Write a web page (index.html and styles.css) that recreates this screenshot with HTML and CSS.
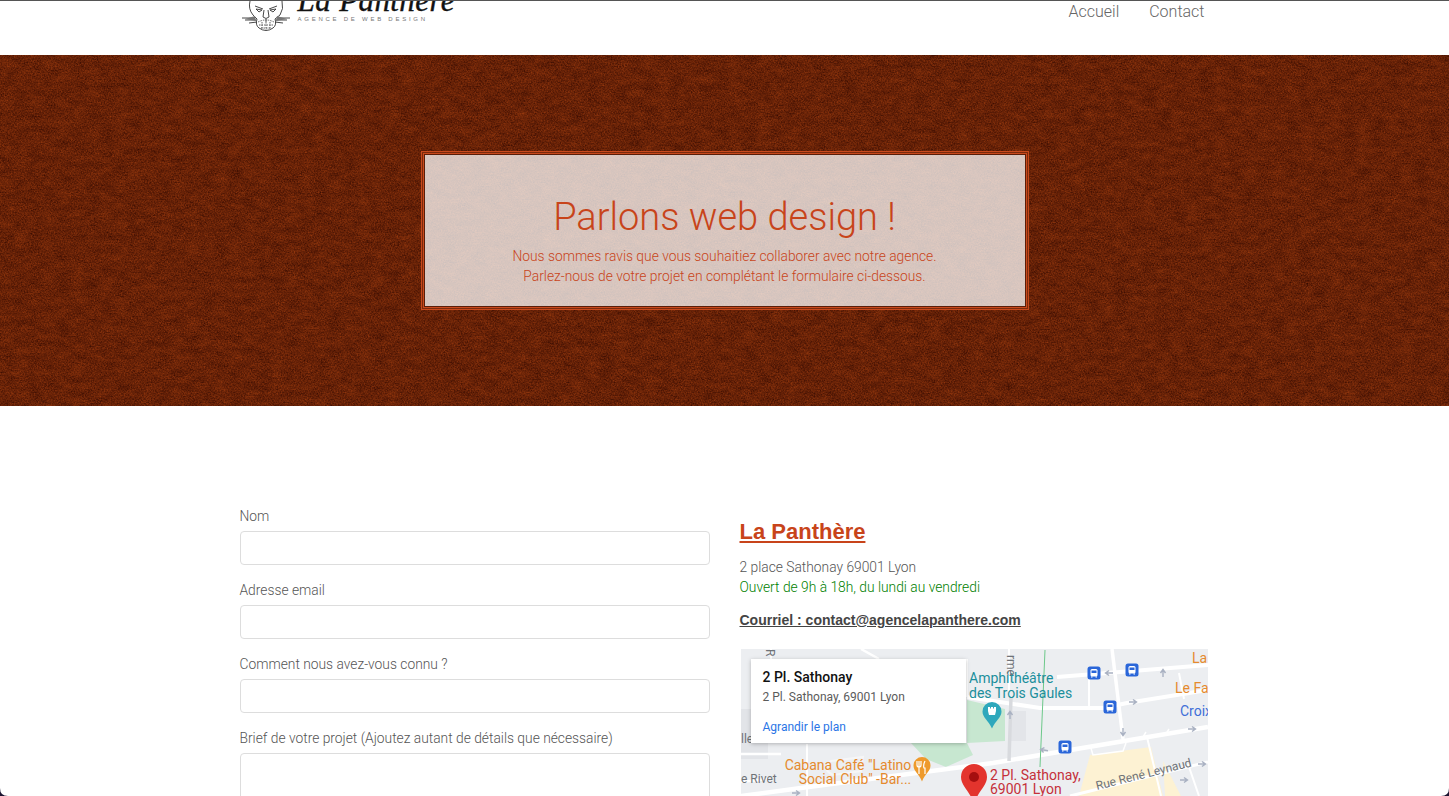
FILE: index.html
```html
<!DOCTYPE html>
<html lang="fr">
<head>
    <meta charset="UTF-8">
    <title>La Panthère - Contact</title>
    <link rel="stylesheet" href="styles.css">
</head>
<body>
    <header class="site-header">
        <div class="container header-row">
            <a class="logo" href="#">
                <svg class="logo-head" width="48" height="31" viewBox="0 0 48 31" fill="none" stroke="#333" stroke-width="0.9">
                    <path d="M8 0 Q6 8 11 14 L15 18 Q13 24 17 27 Q24 32 31 27 Q35 24 33 18 L38 14 Q42 8 40 0"/>
                    <path d="M13 5 L21 8 M35 5 L27 8 M14 8 L20 9 L17 11 Z M34 8 L28 9 L31 11 Z"/>
                    <path d="M22 9 L21 16 Q24 19 27 16 L26 9 M24 18 V21"/>
                    <path d="M16 21 Q24 17 32 21 M17 24 H31 M19 27 H29 M20 21 V28 M24 21 V29 M28 21 V28" stroke="#555" stroke-dasharray="1.500 1"/>
                    <path d="M0 17 L13 17 M3 19 L14 19 M7 22 L15 21 M48 17 L35 17 M45 19 L34 19 M41 22 L33 21" stroke="#333"/>
                    <path d="M3 18 L13 15 L14 20 Z M45 18 L35 15 L34 20 Z" fill="#777" stroke="none"/>
                </svg>
                <span class="logo-text">
                    <span class="logo-name">La Panthère</span>
                    <span class="logo-tag">AGENCE DE WEB DESIGN</span>
                </span>
            </a>
            <nav class="main-nav">
                <a href="#">Accueil</a>
                <a href="#">Contact</a>
            </nav>
        </div>
    </header>

    <section class="hero">
        <svg class="hero-texture" width="100%" height="100%" aria-hidden="true">
            <filter id="rust" x="0" y="0" width="100%" height="100%" color-interpolation-filters="sRGB">
                <feTurbulence type="fractalNoise" baseFrequency="0.7" numOctaves="2" seed="7" result="fine"/>
                <feTurbulence type="fractalNoise" baseFrequency="0.07 0.14" numOctaves="3" seed="3" result="coarse"/>
                <feComposite in="fine" in2="coarse" operator="arithmetic" k1="0" k2="0.75" k3="0.3" k4="-0.03"/>
                <feColorMatrix type="matrix" values="0.5 0 0 0 0.17  0.24 0 0 0 0.02  0.07 0 0 0 -0.005  0 0 0 0 1"/>
            </filter>
            <rect width="100%" height="100%" filter="url(#rust)"/>
        </svg>
        <div class="hero-box">
            <h1>Parlons web design !</h1>
            <p>Nous sommes ravis que vous souhaitiez collaborer avec notre agence.<br>Parlez-nous de votre projet en complétant le formulaire ci-dessous.</p>
        </div>
    </section>

    <main class="container contact">
        <form class="contact-form">
            <label for="nom">Nom</label>
            <input type="text" id="nom">
            <label for="email">Adresse email</label>
            <input type="text" id="email">
            <label for="connu">Comment nous avez-vous connu ?</label>
            <input type="text" id="connu">
            <label for="brief">Brief de votre projet (Ajoutez autant de détails que nécessaire)</label>
            <textarea id="brief" rows="6"></textarea>
        </form>

        <div class="contact-info">
            <h2>La Panthère</h2>
            <p class="address">2 place Sathonay 69001 Lyon</p>
            <p class="hours">Ouvert de 9h à 18h, du lundi au vendredi</p>
            <p class="mail">Courriel : contact@agencelapanthere.com</p>

            <div class="map">
                <svg width="467" height="147" viewBox="0 0 467 147">
                    <defs>
                        <g id="bus">
                            <rect x="-6.500" y="-6.500" width="13" height="13" rx="2.500" fill="#2a66d9"/>
                            <rect x="-3.500" y="-4" width="7" height="7.500" rx="1.500" fill="#fff"/>
                            <rect x="-2.500" y="-2.500" width="5" height="2.500" fill="#2a66d9"/>
                            <rect x="-3" y="3.500" width="1.500" height="1" fill="#fff"/>
                            <rect x="1.500" y="3.500" width="1.500" height="1" fill="#fff"/>
                        </g>
                        <path id="arrow" d="M-4 0 H3 M0 -2.500 L3.500 0 L0 2.500" fill="none" stroke="#a9b1c2" stroke-width="1.400"/>
                    </defs>
                    <rect width="467" height="147" fill="#eceef1"/>
                    <rect x="0" y="60" width="27" height="50" fill="#e2e4e8"/>
                    <rect x="268" y="62" width="17" height="30" fill="#e3e5e9"/>
                    <path d="M226 51 L264 60 L264 92 L226 94 Z" fill="#c7e7d0"/>
                    <path d="M170 94 L226 94 L232 106 L205 118 L185 110 Z" fill="#c7e7d0"/>
                    <path d="M349 106 L410 98 L422 147 L338 147 Z M422 112 L440 147 L424 147 Z" fill="#fdf2d3"/>
                    <g fill="none" stroke="#fff">
                        <path d="M226 48 L299 59 L362 59 L386 54 L467 41" stroke-width="4"/>
                        <path d="M316 28 L467 16" stroke-width="4"/>
                        <path d="M252 114 L467 78 M0 147 L60 139 L252 114" stroke-width="4.500"/>
                        <path d="M329 147 L467 113" stroke-width="3"/>
                        <path d="M371 0 L382 90" stroke-width="3.500"/>
                        <path d="M406 88 L420 147 M348 30 L348 58 M438 24 L443 50 M447 115 L458 147 M66 95 L66 147 M30 0 L30 10 M268 0 L268 47 M226 10 L226 48" stroke-width="2"/>
                        <path d="M0 105 L40 105 M120 0 L138 10 M0 133 L28 130" stroke-width="2.500"/>
                        <path d="M270 48 L268 112" stroke="#d8dade" stroke-width="3.500"/>
                        <path d="M349 96 L352 106 L382 102 L385 94 M405 83 L402 88 L425 85 L428 80" stroke-width="1.500"/>
                        <path d="M90 112 Q80 120 92 126 L120 122 L122 108 Z" stroke="#f6f6f7" stroke-width="2"/>
                    </g>
                    <path d="M304 1 L299 118" fill="none" stroke="#6dc88a" stroke-width="1"/>
                    <use href="#arrow" x="368" y="24" transform="rotate(180 368 24)"/>
                    <use href="#arrow" x="392" y="53"/>
                    <use href="#arrow" x="451" y="80"/>
                    <use href="#arrow" x="303" y="101" transform="rotate(190 303 101)"/>
                    <use href="#arrow" x="382" y="83" transform="rotate(90 382 83)"/>
                    <use href="#arrow" x="422" y="24" transform="rotate(-90 422 24)"/>
                    <use href="#arrow" x="269" y="66" transform="rotate(-90 269 66)"/>
                    <use href="#arrow" x="461" y="115"/>
                    <use href="#arrow" x="443" y="131"/>
                    <use href="#arrow" x="55" y="144"/>
                    <use href="#bus" x="353" y="24"/>
                    <use href="#bus" x="391" y="21"/>
                    <use href="#bus" x="369" y="58"/>
                    <use href="#bus" x="324" y="98"/>

                    <!-- pins -->
                    <path d="M251 53 a9.500 9.500 0 0 1 9.500 9.500 c0 6 -6 9 -9.500 17 c-3.500 -8 -9.500 -11 -9.500 -17 a9.500 9.500 0 0 1 9.500 -9.500 Z" fill="#2ea8bc"/>
                    <path d="M247 62 V58 H249 V59.500 H250 V58 H252 V59.500 H253 V58 H255 V62 L254 66 H248 Z" fill="#fff"/>
                    <path d="M181 108 a8.500 8.500 0 0 1 8.500 8.500 c0 6 -5.500 8 -8.500 16 c-3 -8 -8.500 -10 -8.500 -16 a8.500 8.500 0 0 1 8.500 -8.500 Z" fill="#ee9a2c"/>
                    <path d="M178 112 V120 M176 112 V116 Q176 118 178 118 Q180 118 180 116 V112 M178 118 V125 M184 112 Q182 116 183 119 H184 V125" stroke="#fff" stroke-width="1.200" fill="none"/>
                    <path d="M233 115 a13 13 0 0 1 13 13 c0 9 -9 14 -13 27 c-4 -13 -13 -18 -13 -27 a13 13 0 0 1 13 -13 Z" fill="#e3342d"/>
                    <circle cx="233" cy="128" r="5" fill="#a50f0f"/>

                    <!-- labels -->
                    <g class="map-label">
                        <text class="lbl-teal" x="228" y="34">Amphithéâtre</text>
                        <text class="lbl-teal" x="228" y="49">des Trois Gaules</text>
                        <text class="lbl-orange" x="107" y="121" text-anchor="middle">Cabana Café "Latino</text>
                        <text class="lbl-orange" x="114" y="135" text-anchor="middle">Social Club" -Bar...</text>
                        <text class="lbl-red" x="249" y="131">2 Pl. Sathonay,</text>
                        <text class="lbl-red" x="249" y="145">69001 Lyon</text>
                        <text class="lbl-orange" x="451" y="14">La</text>
                        <text class="lbl-orange" x="434" y="44">Le Fa</text>
                        <text class="lbl-blue" x="439" y="67">Croix</text>
                        <text class="lbl-grey" x="0" y="134">e Rivet</text>
                        <text class="lbl-grey" x="0" y="94">lle</text>
                        <text class="lbl-grey" transform="translate(356 141) rotate(-14)">Rue René Leynaud</text>
                        <text class="lbl-grey" transform="translate(266 6) rotate(90)">rme</text>
                        <text class="lbl-grey" transform="translate(25 0) rotate(90)">R</text>
                    </g>
                </svg>
                <div class="map-card">
                    <strong>2 Pl. Sathonay</strong>
                    <span>2 Pl. Sathonay, 69001 Lyon</span>
                    <a href="#">Agrandir le plan</a>
                </div>
            </div>
        </div>
    </main>

    <div class="corner corner-left"></div>
    <div class="corner corner-right"></div>
</body>
</html>
```

FILE: styles.css
```css
html, body {
    height: 796px;
    overflow: hidden;
}
body {
    position: relative;
    margin: 0;
    background: #fff;
    color: #555;
    font-family: Roboto, "Liberation Sans", Arial, sans-serif;
    font-weight: 300;
    font-size: 13.8px;
}
a {
    color: inherit;
    text-decoration: none;
}
.container {
    width: 970px;
    margin: 0 auto;
}

/* header */
.site-header {
    height: 54px;
    border-top: 1px solid #555;
    overflow: hidden;
}
.header-row {
    display: flex;
    justify-content: space-between;
    align-items: flex-start;
}
.logo {
    display: flex;
    gap: 8px;
    margin-left: 2px;
}
.logo-text {
    display: flex;
    flex-direction: column;
    margin-top: -16px;
}
.logo-name {
    font-family: "Liberation Serif", serif;
    font-style: italic;
    font-weight: 400;
    font-size: 31px;
    line-height: 31px;
    color: #111;
    letter-spacing: 0.4px;
    -webkit-text-stroke: 0.4px #111;
}
.logo-tag {
    font-family: "Liberation Sans", sans-serif;
    font-weight: 400;
    font-size: 6px;
    line-height: 7px;
    letter-spacing: 2.75px;
    color: #777;
}
.main-nav {
    display: flex;
    gap: 30px;
    padding: 1px 5px 0 0;
    font-size: 16px;
    line-height: 20px;
    color: #666;
}

/* hero */
.hero {
    position: relative;
    display: flex;
    justify-content: center;
    height: 351px;
    background: #6b2508;
}
.hero-texture {
    position: absolute;
    top: 0;
    left: 0;
}
.hero-box {
    position: relative;
    box-sizing: border-box;
    width: 600px;
    height: 151px;
    margin-top: 100px;
    padding-top: 38px;
    background: rgba(255, 255, 255, 0.74);
    box-shadow: 0 0 0 1px #5a1d08, 0 0 0 2px #c8491c, 0 0 0 3px #7a2a0c, 0 0 0 4px #c8491c;
    text-align: center;
    color: #c8441a;
}
.hero-box h1 {
    margin: 0;
    font-size: 38px;
    font-weight: 300;
    line-height: 48px;
}
.hero-box p {
    margin: 5px 0 0;
    font-size: 13.8px;
    line-height: 20px;
}

/* contact */
.contact {
    display: grid;
    grid-template-columns: 1fr 1fr;
    gap: 30px;
    padding-top: 100px;
}
.contact-form label {
    display: block;
    height: 20px;
    margin-bottom: 5px;
    line-height: 20px;
}
.contact-form input,
.contact-form textarea {
    display: block;
    box-sizing: border-box;
    width: 100%;
    height: 34px;
    margin-bottom: 15px;
    border: 1px solid #ddd;
    border-radius: 4px;
    background: #fff;
}
.contact-form textarea {
    height: 120px;
    resize: none;
}
.contact-info h2 {
    margin: 11px 0 0;
    font-family: "Liberation Sans", Arial, sans-serif;
    font-size: 22px;
    font-weight: 700;
    line-height: 30px;
    color: #c8441a;
    text-decoration: underline;
}
.address {
    margin: 10px 0 0;
    line-height: 20px;
}
.hours {
    margin: 0;
    line-height: 20px;
    color: #008000;
}
.mail {
    margin: 13px 0 0;
    font-family: "Liberation Sans", Arial, sans-serif;
    font-size: 14px;
    line-height: 20px;
    font-weight: 700;
    color: #444;
    text-decoration: underline;
}

/* map, labels and pins are placed on the map itself */
.map {
    position: relative;
    width: 467px;
    height: 147px;
    margin: 19px 0 0 1px;
    overflow: hidden;
}
.map svg {
    display: block;
}
.map-label text {
    font-family: Roboto, sans-serif;
    font-weight: 400;
    font-size: 14px;
}
.map-label .lbl-teal { fill: #1b8f9c; }
.map-label .lbl-orange { fill: #e58a2e; }
.map-label .lbl-red { fill: #c5303a; }
.map-label .lbl-blue { fill: #3f6fd8; }
.map-label .lbl-grey { fill: #6f7378; font-size: 12px; }
.map-card {
    position: absolute;
    top: 10px;
    left: 10px;
    box-sizing: border-box;
    display: flex;
    flex-direction: column;
    width: 215px;
    height: 84px;
    padding: 10px 12px;
    background: #fff;
    box-shadow: 0 1px 4px rgba(0, 0, 0, 0.25);
    font-family: Roboto, sans-serif;
    font-weight: 400;
    color: #5b5b5b;
    font-size: 12px;
}
.map-card strong {
    font-size: 14px;
    line-height: 16px;
    font-weight: 500;
    color: #111;
}
.map-card span {
    margin-top: 5px;
    line-height: 14px;
}
.map-card a {
    margin-top: 16px;
    line-height: 14px;
    color: #2a75e6;
}

/* window corners of the screenshot */
.corner {
    position: absolute;
    bottom: 0;
    width: 8px;
    height: 8px;
    background: #1c1430;
}
.corner-left {
    left: 0;
    clip-path: path("M0 0 Q0 8 8 8 L0 8 Z");
}
.corner-right {
    right: 0;
    clip-path: path("M8 0 Q8 8 0 8 L8 8 Z");
}
```
